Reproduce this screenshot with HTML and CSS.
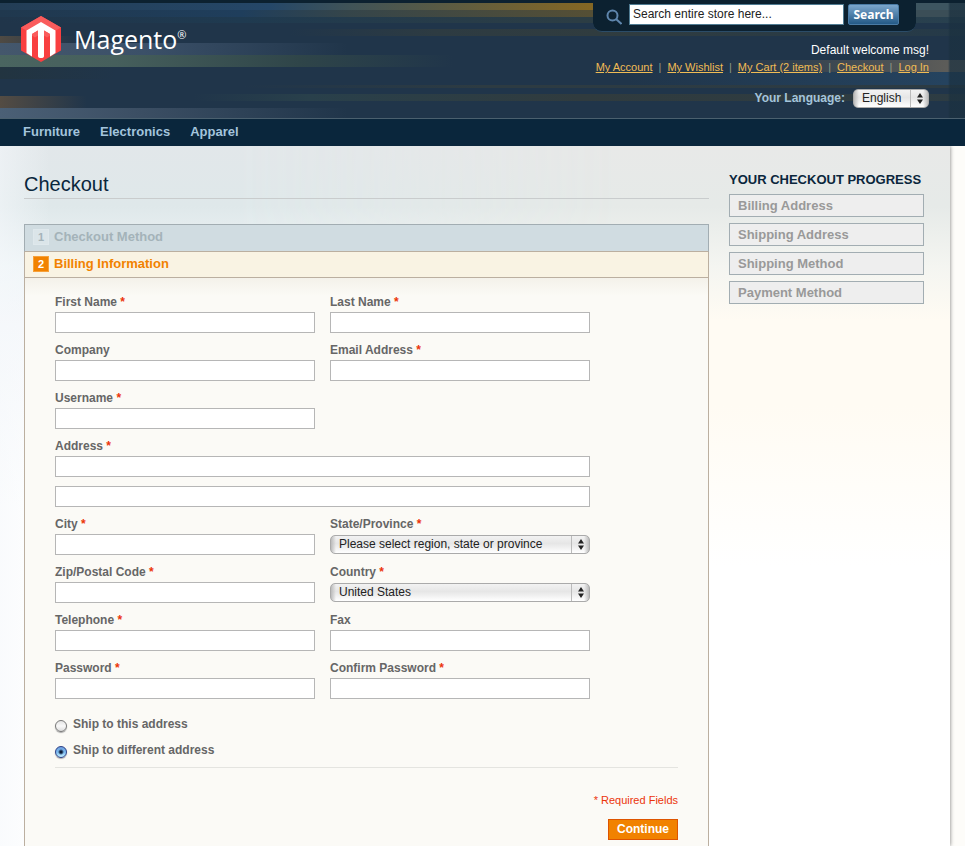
FILE: index.html
```html
<!DOCTYPE html>
<html lang="en">
<head>
<meta charset="utf-8">
<title>Checkout</title>
<link rel="stylesheet" href="styles.css">
</head>
<body>
<header class="header">
  <a class="logo" href="#">
    <svg class="logo-mark" viewBox="0 0 40 46" aria-hidden="true">
      <path fill="#f93f40" d="M20 0 40 11.5V34.500L20 46 0 34.500V11.500Z"/>
      <path fill="#fa5c5c" d="M20 0 40 11.500 34 15 20 6.500 6 15 0 11.500Z"/>
      <path fill="#fff" d="M20 6 34.500 14.500V37L29 40.500V18L23 14.500V40Q23 42 20 42 17 42 17 40V14.500L11 18V40.500L5.500 37V14.500Z"/>
      <path fill="#fa5c5c" d="M11 18 17 14.500V19.500L14 21.500 11 19.500ZM29 18 23 14.500V19.500L26 21.500 29 19.500Z"/>
    </svg>
    <span class="logo-name">Magento<sup class="logo-reg">®</sup></span>
  </a>
  <div class="header-tools">
    <form class="search">
      <label class="search-label" for="search" aria-label="Search">
        <svg class="search-icon" viewBox="0 0 16 16" aria-hidden="true"><circle cx="6.500" cy="6.500" r="5"/><path d="M10 10 15.500 15"/></svg>
      </label>
      <input class="search-input" id="search" type="text" value="Search entire store here...">
      <button class="search-button" type="button">Search</button>
    </form>
    <p class="welcome">Default welcome msg!</p>
    <ul class="links">
      <li><a href="#">My Account</a></li>
      <li><a href="#">My Wishlist</a></li>
      <li><a href="#">My Cart (2 items)</a></li>
      <li><a href="#">Checkout</a></li>
      <li><a href="#">Log In</a></li>
    </ul>
    <div class="language">
      <label for="language">Your Language:</label>
      <span class="select">
        <select id="language"><option>English</option></select>
        <svg class="arrows" viewBox="0 0 6 11" aria-hidden="true"><path d="M3 0 6 4.500H0ZM3 11 0 6.500H6Z"/></svg>
      </span>
    </div>
  </div>
</header>
<nav class="nav">
  <a href="#">Furniture</a>
  <a href="#">Electronics</a>
  <a href="#">Apparel</a>
</nav>
<div class="page">
  <main class="main">
    <h1 class="title">Checkout</h1>
    <section class="steps">
      <h2 class="step"><span class="step-number">1</span>Checkout Method</h2>
      <h2 class="step step-active"><span class="step-number">2</span>Billing Information</h2>
      <form class="billing">
        <div class="fields">
          <div class="field"><label for="first">First Name <em>*</em></label><input id="first" type="text"></div>
          <div class="field"><label for="last">Last Name <em>*</em></label><input id="last" type="text"></div>
          <div class="field"><label for="company">Company</label><input id="company" type="text"></div>
          <div class="field"><label for="email">Email Address <em>*</em></label><input id="email" type="text"></div>
          <div class="field field-first"><label for="username">Username <em>*</em></label><input id="username" type="text"></div>
          <div class="field field-wide"><label for="address">Address <em>*</em></label><input id="address" type="text"></div>
          <div class="field field-wide"><input id="address2" type="text" aria-label="Address line 2"></div>
          <div class="field"><label for="city">City <em>*</em></label><input id="city" type="text"></div>
          <div class="field"><label for="state">State/Province <em>*</em></label>
            <span class="select">
              <select id="state"><option>Please select region, state or province</option></select>
              <svg class="arrows" viewBox="0 0 6 11" aria-hidden="true"><path d="M3 0 6 4.500H0ZM3 11 0 6.500H6Z"/></svg>
            </span>
          </div>
          <div class="field"><label for="zip">Zip/Postal Code <em>*</em></label><input id="zip" type="text"></div>
          <div class="field"><label for="country">Country <em>*</em></label>
            <span class="select">
              <select id="country"><option>United States</option></select>
              <svg class="arrows" viewBox="0 0 6 11" aria-hidden="true"><path d="M3 0 6 4.500H0ZM3 11 0 6.500H6Z"/></svg>
            </span>
          </div>
          <div class="field"><label for="telephone">Telephone <em>*</em></label><input id="telephone" type="text"></div>
          <div class="field"><label for="fax">Fax</label><input id="fax" type="text"></div>
          <div class="field"><label for="password">Password <em>*</em></label><input id="password" type="password"></div>
          <div class="field"><label for="confirm">Confirm Password <em>*</em></label><input id="confirm" type="password"></div>
        </div>
        <div class="shipping">
          <div class="choice"><input id="ship-this" name="ship" type="radio"><label for="ship-this">Ship to this address</label></div>
          <div class="choice"><input id="ship-other" name="ship" type="radio" checked><label for="ship-other">Ship to different address</label></div>
        </div>
        <div class="actions">
          <p class="required">* Required Fields</p>
          <button class="continue" type="button">Continue</button>
        </div>
      </form>
    </section>
  </main>
  <aside class="progress">
    <h2 class="progress-title">YOUR CHECKOUT PROGRESS</h2>
    <ol class="progress-list">
      <li>Billing Address</li>
      <li>Shipping Address</li>
      <li>Shipping Method</li>
      <li>Payment Method</li>
    </ol>
  </aside>
</div>
</body>
</html>
```
FILE: styles.css
```css
* { box-sizing: border-box; }

body {
  margin: 0;
  min-height: 100vh;
  display: flex;
  flex-direction: column;
  background: #fdfcf9;
  font: 12px/16px "Liberation Sans", Arial, sans-serif;
  color: #666;
}

h1, h2, p, ul, ol { margin: 0; padding: 0; }
ul, ol { list-style: none; }
input, select, button { font: inherit; margin: 0; }

/* Header, with its horizontal light streaks */
.header {
  display: flex;
  justify-content: space-between;
  padding: 0 36px 10px 21px;
  border-top: 3px solid #0c2130;
  border-bottom: 1px solid #4b606e;
  background:
    linear-gradient(90deg, #1a303f00 calc(100% - 17px), #1a303fb0 calc(100% - 15px)) 0 0 / 100% 100%,
    linear-gradient(90deg, #233d55, #254768 28%, #3f5358 36%, #846724 61%, #846724 80%, #3d5560 92%) 0 0 / 100% 7px,
    linear-gradient(90deg, #20384e, #1f3e5c 25%, #35454a 36%, #554f35 61%, #3b4e57 92%) 0 7px / 100% 7px,
    linear-gradient(90deg, #20354a, #1f3a50 25%, #2c3d44 60%, #28404f) 0 14px / 100% 6px,
    linear-gradient(90deg, #20354a 30%, #2d3b42 45%, #303c3f 62%, #253a49) 0 26px / 100% 7px,
    linear-gradient(90deg, #4f4a43, #20354a00 8%) 0 28px / 100% 12px,
    linear-gradient(90deg, #44576c, #3b5068 15%, #20354a00 36%) 0 40px / 100% 12px,
    linear-gradient(90deg, #4a6560, #465f5c 12%, #2f4549 31%, #20354a00 47%) 0 52px / 100% 12px,
    linear-gradient(90deg, #223440, #20354a00 12%) 0 64px / 100% 12px,
    linear-gradient(90deg, #20354a00 75%, #5c5c59 98%) 0 57px / 100% 12px,
    linear-gradient(90deg, #20354a00 65%, #25435f 98%) 0 69px / 100% 13px,
    linear-gradient(90deg, #20354a00 25%, #2d3b42 50%, #2c3b43) 0 82px / 100% 3px,
    linear-gradient(90deg, #20354a00 20%, #29404b 32%, #303b3e 60%, #2d3c43) 0 91px / 100% 7px,
    linear-gradient(90deg, #544c43, #20354a00 9%) 0 93px / 100% 12px,
    linear-gradient(90deg, #4b6076, #3c4f64 14%, #20354a00 36%) 0 105px / 100% 10px,
    #20354a;
  background-repeat: no-repeat;
}

.logo {
  display: flex;
  align-items: flex-start;
  gap: 13px;
  padding-top: 13px;
  color: #fff;
  text-decoration: none;
}
.logo-mark { width: 40px; height: 46px; }
.logo-name { font: 25px/46px "Open Sans", sans-serif; }
.logo-reg { font-size: 11px; line-height: 0; vertical-align: 10px; }

.header-tools { display: flex; flex-direction: column; align-items: flex-end; }

.search {
  display: flex;
  align-items: flex-start;
  margin-right: 13px;
  padding: 1px 17px 6px 13px;
  border-bottom: 1px solid #2b4c68;
  border-radius: 0 0 9px 9px;
  background: #0c2130;
}
.search-label { padding: 5px 7px 0 0; }
.search-icon { display: block; width: 16px; height: 16px; fill: none; stroke: #5f86ad; stroke-width: 2; }
.search-input {
  width: 215px;
  height: 21px;
  margin-right: 4px;
  padding: 0 3px 1px;
  border: 1px solid #4f7b92;
  background: #fff;
  color: #222;
}
.search-button {
  width: 51px;
  height: 21px;
  padding: 0;
  border: 1px solid #4a7ba5;
  border-radius: 2px;
  background: linear-gradient(#7ba6cc, #245a87);
  color: #fff;
  font: bold 12px/18px "Noto Sans", sans-serif;
}

.welcome { padding-top: 9px; line-height: 18px; color: #fff; }
.links { display: flex; font-size: 11px; line-height: 16px; }
.links li + li::before { content: "|"; padding: 0 6px; color: #8d9a86; }
.links a { color: #f0bc55; }

.language { display: flex; align-items: center; gap: 8px; padding-top: 14px; font-weight: bold; color: #a3c4dc; }
.language label { padding-bottom: 2px; }
.language .select { width: 76px; font-weight: normal; }

.nav {
  display: flex;
  gap: 20px;
  padding: 5px 23px 6px;
  background: #0a263c;
}
.nav a { color: #a3c4dc; font-size: 13px; font-weight: bold; text-decoration: none; }

/* Drop-downs */
.select { display: block; position: relative; }
.select select {
  display: block;
  width: 100%;
  height: 19px;
  padding: 0 24px 1px 8px;
  border: 1px solid #aaa;
  border-radius: 5px;
  appearance: none;
  background:
    linear-gradient(#bbb, #bbb) right 17px top / 1px 100% no-repeat,
    linear-gradient(90deg, #bbb, #bbb0 5px, #bbb0 calc(100% - 5px), #bbb),
    linear-gradient(#f2f2f2, #e6e6e6 45%, #fff);
  color: #222;
}
.arrows { position: absolute; top: 4px; right: 6px; width: 6px; height: 11px; fill: #222; pointer-events: none; }

/* Page */
.page {
  position: relative;
  isolation: isolate;
  flex: 1;
  display: flex;
  gap: 20px;
  margin-right: 15px;
  padding: 0 26px 0 24px;
  background: linear-gradient(#e8e9e8, #e6eae8 60px, #f4f5f1 120px, #fffbf3 175px, #fffbf3 260px, #fffefc 380px, #fff 420px);
  box-shadow: 0 0 4px #777;
  clip-path: inset(0 -5px 0 0);
}
/* Cool tint that fades out towards the right */
.page::before {
  content: "";
  position: absolute;
  inset: 0;
  z-index: -1;
  background:
    linear-gradient(90deg, #f5f8fb90, #f5f8fb00 50px),
    linear-gradient(#e2e7ea, #dfe8ea 60px, #eff5f7 120px, #f6f8fb 180px, #fafbfd 260px, #fff 360px);
  mask-image: linear-gradient(90deg, #000 25%, transparent 65%);
}
.main { flex: 1; display: flex; flex-direction: column; }
.title {
  padding: 26px 0 2px;
  border-bottom: 1px solid #c9cccd;
  color: #0a263c;
  font-size: 20px;
  font-weight: normal;
  line-height: 24px;
}

.steps { flex: 1; margin-top: 25px; border: 1px solid #bbafa0; border-width: 0 1px; background: #fbfaf6; }
.step {
  display: flex;
  align-items: center;
  gap: 5px;
  height: 28px;
  margin: 0 -1px;
  padding: 0 8px 2px;
  border: 1px solid #a2adb2;
  border-bottom-color: #bbafa0;
  background: #d0dce1;
  color: #a4b3b9;
  font-size: 13px;
}
.step-number {
  width: 16px;
  border: 1px solid #dfe8ec;
  background: #dbe5e9;
  font-size: 11px;
  line-height: 14px;
  text-align: center;
}
.step-active { height: 26px; padding-bottom: 1px; border-color: #bbafa0; border-top: 0; background: #f9f3e3; color: #f18200; }
.step-active .step-number { border-color: #f7a13a; background: #f18200; color: #fff; }

.billing { padding: 16px 30px 6px; background: linear-gradient(#f4f1ea, #f4f1ea00 18px); }
.fields { display: grid; grid-template-columns: 1fr 1fr; gap: 9px 15px; max-width: 535px; }
.field label { display: block; margin-bottom: 2px; font-weight: bold; }
.field em { color: #eb340a; font-style: normal; }
.field input {
  display: block;
  width: 100%;
  height: 21px;
  padding: 2px;
  border: 1px solid #b6b6b6;
  background: #fff;
}
.field .select { padding-top: 1px; }
.field .arrows { top: 5px; }
.field-first { grid-column: 1; }
.field-wide { grid-column: 1 / -1; }

.shipping { display: grid; gap: 10px; padding: 17px 0 9px; border-bottom: 1px solid #e4e4e0; }
.choice { display: flex; align-items: flex-end; gap: 6px; height: 16px; font-weight: bold; }
.choice input {
  flex: none;
  width: 12px;
  height: 12px;
  border: 1px solid #777;
  border-radius: 50%;
  appearance: none;
  background: linear-gradient(#e4e4e4, #f8f8f8 50%, #ddd);
  box-shadow: 0 1px 1px #aaa;
}
.choice input:checked {
  border-color: #2b3f86;
  background: radial-gradient(circle, #0b1c38 1px, #0b1c3800 3px), linear-gradient(#6f9fdd, #79b9f0 50%, #c5f0ff);
}

.actions { display: flex; flex-direction: column; align-items: flex-end; gap: 11px; padding-top: 24px; }
.required { color: #eb340a; font-size: 11px; }
.continue {
  height: 21px;
  padding: 0 8px 1px;
  border: 1px solid #de5400;
  background: #f18200;
  color: #fff;
  font-weight: bold;
}

/* Sidebar */
.progress { flex: none; width: 195px; padding-top: 26px; }
.progress-title { color: #0a263c; font-size: 13px; line-height: 16px; white-space: nowrap; }
.progress-list { display: grid; gap: 6px; margin-top: 6px; }
.progress-list li {
  height: 23px;
  padding: 0 8px;
  border: 1px solid #a2adb2;
  background: #eee;
  color: #999;
  font-size: 13px;
  font-weight: bold;
  line-height: 21px;
}
```
